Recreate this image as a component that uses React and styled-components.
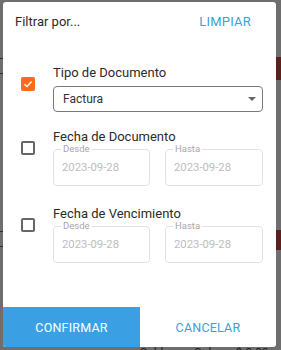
import * as React from 'react'
import styled, { createGlobalStyle } from 'styled-components'

const GlobalStyle = createGlobalStyle`
  html, body {
    margin: 0;
    padding: 0;
    background: #6e6e6e;
    font-family: Roboto, 'Liberation Sans', sans-serif;
  }
  #root {
    position: relative;
    width: 281px;
    height: 350px;
    overflow: hidden;
  }
`

// page behind the dialog, already dimmed by the backdrop
const Page = styled.div`
  display: flex;
  flex-direction: column;
  height: 350px;
  background: #6e6e6e;
`
const PageRow = styled.div`
  display: flex;
  justify-content: space-between;
  margin-top: ${(p) => p.top}px;
  height: ${(p) => p.h}px;
`
const PageBracket = styled.div`
  width: 3px;
  height: 14px;
  margin-top: 1px;
  border: 1px solid #2e2e2e;
  border-left: none;
`
const PageBadge = styled.div`
  width: 5px;
  background: #5a1f1f;
`
const PageFooter = styled.div`
  margin-top: auto;
  padding: 0 0 0 140px;
  height: 4px;
  font-size: 12px;
  line-height: 14px;
  color: #222;
  white-space: nowrap;
  overflow: hidden;
`

const Overlay = styled.div`
  position: absolute;
  inset: 0;
  padding: 2px 5px 3px 3px;
  display: flex;
`
const Dialog = styled.div`
  flex: 1;
  display: flex;
  flex-direction: column;
  background: #fff;
  border-radius: 3px;
  overflow: hidden;
`
const Header = styled.div`
  display: flex;
  justify-content: space-between;
  align-items: center;
  padding: 12px 25px 0 12px;
  font-size: 13px;
  line-height: 16px;
`
const Title = styled.span`
  color: #2b2b2b;
`
const TextButton = styled.button`
  border: none;
  background: none;
  padding: 0;
  font: inherit;
  font-size: ${(p) => p.size || 13}px;
  letter-spacing: 0.2px;
  color: #3a9fe0;
  cursor: pointer;
`
const Body = styled.div`
  display: flex;
  flex-direction: column;
  padding: 35px 13px 0 0;
`
const Section = styled.div`
  display: grid;
  grid-template-columns: 50px 1fr;
  margin-top: ${(p) => p.gap || 0}px;
`
const Check = styled.span`
  justify-self: center;
  margin-top: 12px;
  width: 14px;
  height: 14px;
  box-sizing: border-box;
  border-radius: 2px;
  border: 2px solid ${(p) => (p.checked ? '#ff6a1a' : '#666')};
  background: ${(p) => (p.checked ? '#ff6a1a' : 'transparent')};
  display: flex;
  align-items: center;
  justify-content: center;
`
const Content = styled.div`
  display: flex;
  flex-direction: column;
`
const Label = styled.div`
  font-size: 13px;
  line-height: 16px;
  color: #2b2b2b;
`
const Select = styled.div`
  margin-top: 5px;
  height: 26px;
  box-sizing: border-box;
  border: 1px solid #7a7a7a;
  border-radius: 4px;
  display: flex;
  align-items: center;
  justify-content: space-between;
  padding: 0 6px 0 9px;
  font-size: 12px;
  color: #333;
`
const Caret = styled.span`
  width: 0;
  height: 0;
  border-left: 4px solid transparent;
  border-right: 4px solid transparent;
  border-top: 4px solid #666;
`
const DateRow = styled.div`
  display: grid;
  grid-template-columns: 97px 98px;
  justify-content: space-between;
`
const DateField = styled.fieldset`
  margin: 0;
  height: 41px;
  box-sizing: border-box;
  padding: 0 8px;
  border: 1px solid #e2e2e2;
  border-radius: 4px;
  min-width: 0;
`
const Legend = styled.legend`
  padding: 0 2px;
  margin-left: -1px;
  font-size: 9.5px;
  line-height: 8px;
  color: #a8a8a8;
`
const DateValue = styled.div`
  margin-top: 8px;
  font-size: 11.3px;
  line-height: 14px;
  color: #bdbdbd;
`
const Footer = styled.div`
  margin-top: auto;
  display: grid;
  grid-template-columns: 137px 1fr;
  height: 40px;
`
const Confirm = styled.button`
  border: none;
  background: #3a9fe3;
  color: #fff;
  font: inherit;
  font-size: 12.5px;
  letter-spacing: 0.2px;
  cursor: pointer;
`

const CheckMark = () => (
  <svg width="10" height="10" viewBox="0 0 10 10">
    <path d="M1.5 5.2 L4 7.5 L8.6 2.6" fill="none" stroke="#fff" strokeWidth="1.4" />
  </svg>
)

const DateRange = () => (
  <DateRow>
    <DateField>
      <Legend>Desde</Legend>
      <DateValue>2023-09-28</DateValue>
    </DateField>
    <DateField>
      <Legend>Hasta</Legend>
      <DateValue>2023-09-28</DateValue>
    </DateField>
  </DateRow>
)

export default function App() {
  return (
    <>
      <GlobalStyle />
      <Page>
        <PageRow top={57} h={23}>
          <PageBracket />
          <PageBadge />
        </PageRow>
        <PageRow top={150} h={20}>
          <PageBracket />
          <PageBadge />
        </PageRow>
        <PageFooter>Saldo por Cobrar: $ 0.00</PageFooter>
      </Page>
      <Overlay>
        <Dialog>
          <Header>
            <Title>Filtrar por...</Title>
            <TextButton>LIMPIAR</TextButton>
          </Header>
          <Body>
            <Section>
              <Check checked>
                <CheckMark />
              </Check>
              <Content>
                <Label>Tipo de Documento</Label>
                <Select>
                  <span>Factura</span>
                  <Caret />
                </Select>
              </Content>
            </Section>
            <Section gap={17}>
              <Check />
              <Content>
                <Label>Fecha de Documento</Label>
                <DateRange />
              </Content>
            </Section>
            <Section gap={20}>
              <Check />
              <Content>
                <Label>Fecha de Vencimiento</Label>
                <DateRange />
              </Content>
            </Section>
          </Body>
          <Footer>
            <Confirm>CONFIRMAR</Confirm>
            <TextButton size={12.5}>CANCELAR</TextButton>
          </Footer>
        </Dialog>
      </Overlay>
    </>
  )
}
